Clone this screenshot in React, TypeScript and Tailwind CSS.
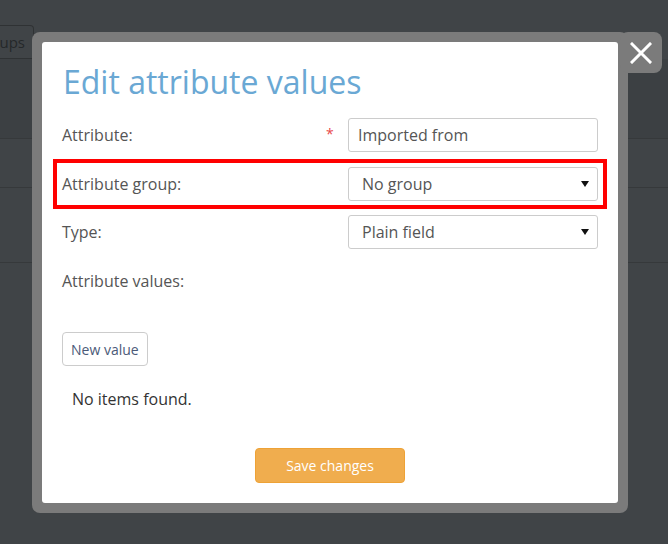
import React from 'react';

const font = { fontFamily: '"Open Sans", "Noto Sans", sans-serif' };

const Caret = () => (
  <svg width="8" height="6" viewBox="0 0 8 6" className="shrink-0">
    <path d="M0 0 L8 0 L4 6 Z" fill="#111" />
  </svg>
);

const Select: React.FC<{ value: string }> = ({ value }) => (
  <div className="w-[250px] h-[34px] border border-[#cccccc] rounded-[3px] bg-white flex items-center justify-between pl-[13px] pr-[8px] text-[16px] text-[#555555]">
    <span>{value}</span>
    <Caret />
  </div>
);

export default function App() {
  return (
    <div className="relative w-[668px] h-[544px] bg-[#404447] overflow-hidden" style={font}>
      {/* page behind the modal */}
      <div className="h-[25px]" />
      <div className="flex">
        <div className="w-[34px] h-[34px] border border-l-0 border-[#2f3234] rounded-tr-[4px] text-[#25282a] text-[15px] flex items-center justify-end pr-[8px]">
          ups
        </div>
      </div>
      <div className="h-[80px] border-b border-[#36393b] bg-[#3c4043]" />
      <div className="h-[49px] border-b border-[#36393b]" />
      <div className="h-[75px] border-b border-[#36393b]" />

      {/* modal */}
      <div className="absolute left-[32px] top-[32px] w-[596px] h-[481px] bg-[#7b7b7b] rounded-[8px] p-[10px]">
        <div className="w-full h-full bg-white rounded-[3px] px-[20px] pt-[20px] flex flex-col">
          <h1 className="text-[32px] leading-[40px] text-[#6aa8d4] font-normal pl-[1px]">
            Edit attribute values
          </h1>

          <div className="mt-[16px] flex items-center h-[34px]">
            <span className="w-[264px] text-[16px] text-[#555555]">Attribute:</span>
            <span className="w-[22px] text-[#e8474a] text-[14px] -mt-[4px]">*</span>
            <div className="w-[250px] h-[34px] border border-[#cccccc] rounded-[3px] flex items-center pl-[9px] text-[16px] text-[#555555]">
              Imported from
            </div>
          </div>

          <div className="mt-[7px] -mx-[9px] border-[4px] border-[#ff0000] h-[50px] flex items-center pl-[5px]">
            <span className="w-[286px] text-[16px] text-[#555555]">Attribute group:</span>
            <Select value="No group" />
          </div>

          <div className="mt-[6px] flex items-center h-[34px]">
            <span className="w-[286px] text-[16px] text-[#555555]">Type:</span>
            <Select value="Plain field" />
          </div>

          <div className="mt-[20px] text-[16px] text-[#555555] leading-[24px]">Attribute values:</div>

          <div className="mt-[39px]">
            <button className="h-[34px] px-[8px] border border-[#cccccc] rounded-[4px] text-[14px] text-[#4b5a78] bg-white">
              New value
            </button>
          </div>

          <div className="mt-[21px] pl-[10px] text-[16px] text-[#333333] leading-[24px]">No items found.</div>

          <div className="mt-[37px] flex justify-center">
            <button className="w-[150px] h-[35px] bg-[#f0ad4e] border border-[#eea236] rounded-[4px] text-[14px] text-white">
              Save changes
            </button>
          </div>
        </div>
      </div>

      {/* close button */}
      <div className="absolute left-[620px] top-[32px] w-[42px] h-[41px] bg-[#7b7b7b] rounded-[8px] flex items-center justify-center">
        <svg width="22" height="22" viewBox="0 0 22 22">
          <path d="M2 2 L20 20 M20 2 L2 20" stroke="#fff" strokeWidth="3" strokeLinecap="square" />
        </svg>
      </div>
    </div>
  );
}
